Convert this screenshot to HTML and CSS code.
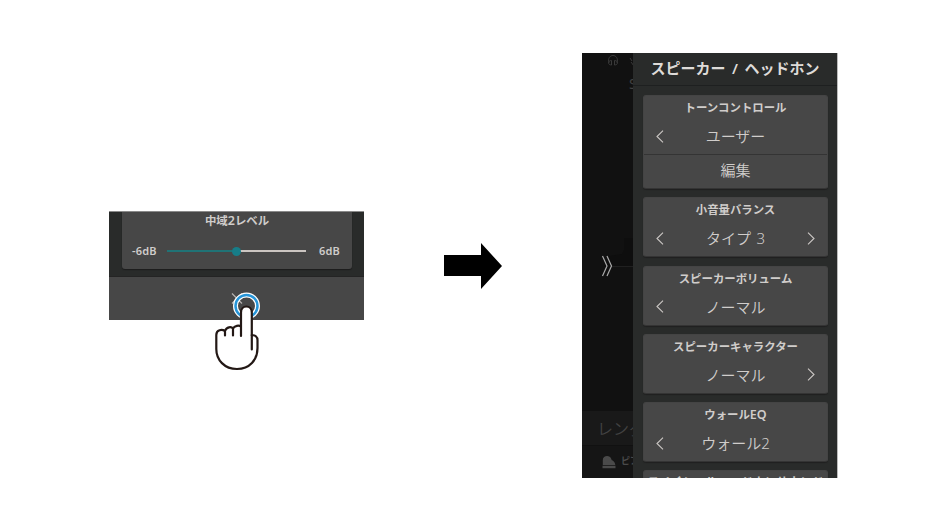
FILE: index.html
```html
<!DOCTYPE html>
<html lang="ja">
<head>
<meta charset="utf-8">
<title>スピーカー / ヘッドホン</title>
<link rel="stylesheet" href="styles.css">
</head>
<body>
<main class="figure">
  <section class="before">
    <div class="before-body">
      <div class="level-card">
        <h2 class="level-title">中域<span class="latin">2</span>レベル</h2>
        <div class="slider-row">
          <span class="db db-min">-6dB</span>
          <div class="track"><i class="fill"></i><i class="thumb"></i></div>
          <span class="db db-max">6dB</span>
        </div>
      </div>
    </div>
    <div class="close-bar"></div>
    <svg class="tap" viewBox="210 288 55 88" aria-hidden="true">
      <path d="M232 293.500l10 10M242 293.500l-10 10" fill="none" stroke="#b5b2b0" stroke-width="1.200"/>
      <circle cx="246.500" cy="306" r="11" fill="none" stroke="#fff" stroke-width="5"/>
      <circle cx="246.500" cy="306" r="11" fill="none" stroke="#2795d8" stroke-width="2.500"/>
      <path d="M241 336V312.500C241 304.500 251.800 304.500 251.800 312.500V335.500C255 334.500 257.500 337 257.500 340V348C257.500 360 249.500 369 237 369C224.500 369 216.300 360 216.300 349V335C216.300 329.500 222 329 225 331C226.500 326.500 231.500 326.500 233 328.500C234.500 325.500 239 325 241 326.500Z" fill="#fff" stroke="#231815" stroke-width="2.200" stroke-linejoin="round"/>
      <path d="M225 331V335.500M233 329V335.500M251.800 335V349.500" fill="none" stroke="#231815" stroke-width="2.200" stroke-linecap="round"/>
    </svg>
  </section>

  <svg class="arrow" viewBox="0 0 58 46" aria-hidden="true"><path d="M0 12H37V0L58 23L37 46V33H0Z"/></svg>

  <section class="after">
    <div class="backdrop">
      <div class="stage">
        <svg class="scene" viewBox="582 53 51 358" aria-hidden="true">
          <path d="M609 63C606 53 620 53 617 63" fill="none" stroke="#3a3a3a"/>
          <path d="M611.500 60.500v4.500c-4 0-4-4.500 0-4.500zM614.500 60.500v4.500c4 0 4-4.500 0-4.500z" fill="none" stroke="#3a3a3a"/>
          <path d="M630 58l2 3M631 62l3 4" stroke="#3a3a3a"/>
          <path d="M633 238h-9v12l-2 4-13 2v11h24z" fill="#0e0e0e"/>
          <path d="M612 266.500h21" stroke="#202020"/>
          <path d="M602.500 256l4.500 10-4.500 10M607 256l4.500 10-4.500 10" fill="none" stroke="#aaa" stroke-width="1.200"/>
        </svg>
        <span class="ghost-s">S</span>
      </div>
      <div class="rendering">レンダ</div>
      <div class="piano-row">
        <svg class="piano" viewBox="0 0 14 13" aria-hidden="true"><path d="M.8 9V4C.8-1.200 8.500-1 9.300 3C9.600 5 13 4.500 13.300 9ZM.5 9.700H13.500V12.300H.5Z"/></svg>
        <span>ピア</span>
      </div>
    </div>
    <div class="panel">
      <h1 class="panel-title">スピーカー / ヘッドホン</h1>
      <div class="cards">
        <article class="card tall">
          <h3>トーンコントロール</h3>
          <div class="value"><svg class="chev" viewBox="0 0 8 13"><path d="M7 .7L1 6.500L7 12.300"/></svg><span>ユーザー</span><b class="chev"></b></div>
          <div class="edit">編集</div>
        </article>
        <article class="card">
          <h3>小音量バランス</h3>
          <div class="value"><svg class="chev" viewBox="0 0 8 13"><path d="M7 .7L1 6.500L7 12.300"/></svg><span class="spaced">タイプ 3</span><svg class="chev" viewBox="0 0 8 13"><path d="M1 .7L7 6.500L1 12.300"/></svg></div>
        </article>
        <article class="card">
          <h3>スピーカーボリューム</h3>
          <div class="value"><svg class="chev" viewBox="0 0 8 13"><path d="M7 .7L1 6.500L7 12.300"/></svg><span>ノーマル</span><b class="chev"></b></div>
        </article>
        <article class="card">
          <h3>スピーカーキャラクター</h3>
          <div class="value"><b class="chev"></b><span>ノーマル</span><svg class="chev" viewBox="0 0 8 13"><path d="M1 .7L7 6.500L1 12.300"/></svg></div>
        </article>
        <article class="card">
          <h3>ウォール<span class="latin">EQ</span></h3>
          <div class="value"><svg class="chev" viewBox="0 0 8 13"><path d="M7 .7L1 6.500L7 12.300"/></svg><span>ウォール2</span><b class="chev"></b></div>
        </article>
        <article class="card">
          <h3 class="long">スペイシャルヘッドホンサウンド</h3>
        </article>
      </div>
    </div>
  </section>
</main>
</body>
</html>
```
FILE: styles.css
```css
* { box-sizing: border-box; }
body { margin: 0; background: #fff; font-family: "Noto Sans", "Noto Sans CJK JP", sans-serif; color: #d0cdcb; }
h1, h2, h3 { margin: 0; font-weight: 600; white-space: nowrap; }
.figure { width: 946px; height: 532px; display: grid; grid-template-columns: 255px 58px 255px; column-gap: 80px; padding: 53px 0 0 109px; align-items: start; overflow: hidden; }
.before { position: relative; margin-top: 158px; width: 255px; height: 109px; display: flex; flex-direction: column; border-top: 1px solid #8a8a8a; }
.before-body { height: 65px; padding: 0 12px 0 13px; background: #292b2a; border-bottom: 1px solid #242424; }
.level-card { height: 57px; background: #474747; border-radius: 0 0 3px 3px; box-shadow: 0 1px 1px #1c1c1c; }
.level-title { height: 19px; line-height: 18px; font-size: 11.400px; text-align: center; }
.latin { font-size: 1.100em; line-height: 1; }
.slider-row { display: flex; align-items: center; height: 40px; padding: 0 12px 0 10px; }
.db { font-size: 11px; font-weight: 600; line-height: 16px; letter-spacing: .2px; }
.db-min { width: 35px; }
.db-max { margin-left: 13px; }
.track { position: relative; width: 139px; height: 2px; background: #cbc5c1; }
.fill { position: absolute; left: 0; top: 0; width: 70px; height: 2px; background: #207376; }
.thumb { position: absolute; left: 65px; top: -3px; width: 9px; height: 9px; border-radius: 50%; background: #167d88; }
.close-bar { flex: 1; background: #474747; }
.tap { position: absolute; left: 101px; top: 76px; width: 55px; height: 88px; }
.arrow { width: 58px; height: 46px; margin-top: 190px; }
.after { width: 255px; height: 425px; display: grid; grid-template-columns: 51px 204px; overflow: hidden; background: #292b2a; box-shadow: 1px 0 0 #bbb; }
.backdrop { overflow: hidden; background: #111; color: #424242; height: 425px; }
.stage { position: relative; height: 358px; }
.scene { display: block; width: 51px; height: 358px; }
.ghost-s { position: absolute; left: 47px; top: 21px; font-size: 14px; line-height: 20px; }
.rendering { height: 34px; padding-left: 15px; line-height: 36px; font-size: 16px; font-weight: 350; white-space: nowrap; background: #191919; }
.piano-row { height: 33px; display: flex; align-items: center; gap: 5px; padding-left: 20px; font-size: 9px; line-height: 12px; font-weight: 600; white-space: nowrap; background: #151515; border-top: 1px solid #111; }
.piano-row span { margin-top: -2px; color: #4a4a4a; }
.piano { width: 14px; height: 13px; flex: none; fill: #4a4a4a; }
.panel { height: 425px; overflow: hidden; background: #292b2a; }
.panel-title { height: 33px; line-height: 31px; font-size: 15px; word-spacing: 2.500px; text-align: center; color: #dedbd8; border-bottom: 1px solid #1e2020; }
.cards { display: flex; flex-direction: column; gap: 8.300px; padding: 9px 9px 0 10px; }
.card { flex: none; height: 60px; background: #474747; border-radius: 3px; border: 1px solid #444; border-bottom-color: #343434; box-shadow: 0 1px 1px #202020; }
.card.tall { height: 94px; }
.card h3 { height: 24px; line-height: 23.500px; font-size: 11.400px; text-align: center; }
.card h3.long { font-size: 11.800px; line-height: 21px; }
.value { height: 34px; display: grid; grid-template-columns: 8px 1fr 8px; align-items: center; padding: 0 12px; }
.value span { font-size: 15px; line-height: 32px; height: 34px; text-align: center; font-weight: 350; }
.value .spaced { word-spacing: 1.500px; }
.chev { width: 8px; height: 13px; margin-top: -2px; fill: none; stroke: #cbc7c4; stroke-width: 1.100; }
.edit { height: 34px; border-top: 1px solid #343434; text-align: center; font-size: 15px; line-height: 30px; font-weight: 350; }
```
